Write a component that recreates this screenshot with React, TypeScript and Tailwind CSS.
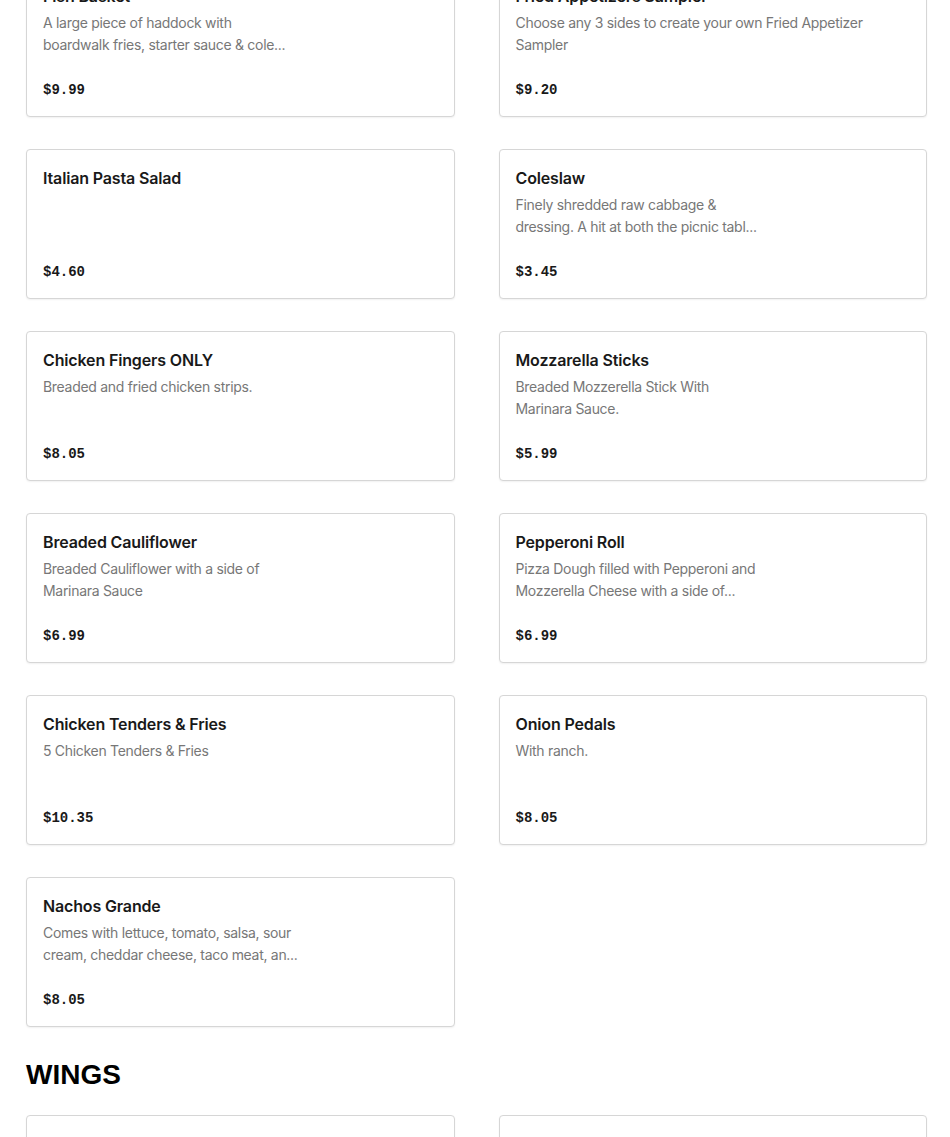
import React from "react"

type Item = {
  name: string
  lines: string[]
  price: string
}

const sides: Item[] = [
  {
    name: "Fish Basket",
    lines: ["A large piece of haddock with", "boardwalk fries, starter sauce & cole..."],
    price: "$9.99",
  },
  {
    name: "Fried Appetizers Sampler",
    lines: ["Choose any 3 sides to create your own Fried Appetizer", "Sampler"],
    price: "$9.20",
  },
  { name: "Italian Pasta Salad", lines: [], price: "$4.60" },
  {
    name: "Coleslaw",
    lines: ["Finely shredded raw cabbage &", "dressing. A hit at both the picnic tabl..."],
    price: "$3.45",
  },
  { name: "Chicken Fingers ONLY", lines: ["Breaded and fried chicken strips."], price: "$8.05" },
  {
    name: "Mozzarella Sticks",
    lines: ["Breaded Mozzerella Stick With", "Marinara Sauce."],
    price: "$5.99",
  },
  {
    name: "Breaded Cauliflower",
    lines: ["Breaded Cauliflower with a side of", "Marinara Sauce"],
    price: "$6.99",
  },
  {
    name: "Pepperoni Roll",
    lines: ["Pizza Dough filled with Pepperoni and", "Mozzerella Cheese with a side of..."],
    price: "$6.99",
  },
  { name: "Chicken Tenders & Fries", lines: ["5 Chicken Tenders & Fries"], price: "$10.35" },
  { name: "Onion Pedals", lines: ["With ranch."], price: "$8.05" },
  {
    name: "Nachos Grande",
    lines: ["Comes with lettuce, tomato, salsa, sour", "cream, cheddar cheese, taco meat, an..."],
    price: "$8.05",
  },
]

const wings: Item[] = [
  { name: "Bone-In Wings (10)", lines: ["Served with celery & blue cheese."], price: "$13.99" },
  { name: "Boneless Wings", lines: ["Served with celery & blue cheese."], price: "$12.99" },
]

function MenuCard({ item }: { item: Item }) {
  return (
    <div className="flex h-[150px] flex-col rounded-[4px] border border-[#d6d6d6] bg-white p-4 shadow-[0_1px_2px_rgba(0,0,0,0.06)]">
      <h3 className="text-[16px] font-semibold leading-6 tracking-[-0.15px] text-[#191919]">{item.name}</h3>
      {item.lines.length > 0 && (
        <div className="mt-1 text-[14px] leading-[22px] tracking-[-0.3px] text-[#777777]">
          {item.lines.map((l) => (
            <div key={l} className="whitespace-nowrap">
              {l}
            </div>
          ))}
        </div>
      )}
      <p className="mt-auto font-['Liberation_Mono',monospace] text-[14px] font-bold leading-5 text-[#191919]">
        {item.price}
      </p>
    </div>
  )
}

export default function App() {
  return (
    <div className="h-[1137px] overflow-hidden bg-white font-['Inter',sans-serif]">
      <div className="-mt-[33px] pl-[26px] pr-[23px]">
        <div className="grid grid-cols-2 gap-x-[44px] gap-y-8">
          {sides.map((item) => (
            <MenuCard key={item.name} item={item} />
          ))}
        </div>

        <h2 className="mt-[31px] font-['Liberation_Sans',Arial,sans-serif] text-[28px] font-bold leading-[34px] text-black">
          WINGS
        </h2>

        <div className="mt-[23px] grid grid-cols-2 gap-x-[44px] gap-y-8">
          {wings.map((item) => (
            <MenuCard key={item.name} item={item} />
          ))}
        </div>
      </div>
    </div>
  )
}
